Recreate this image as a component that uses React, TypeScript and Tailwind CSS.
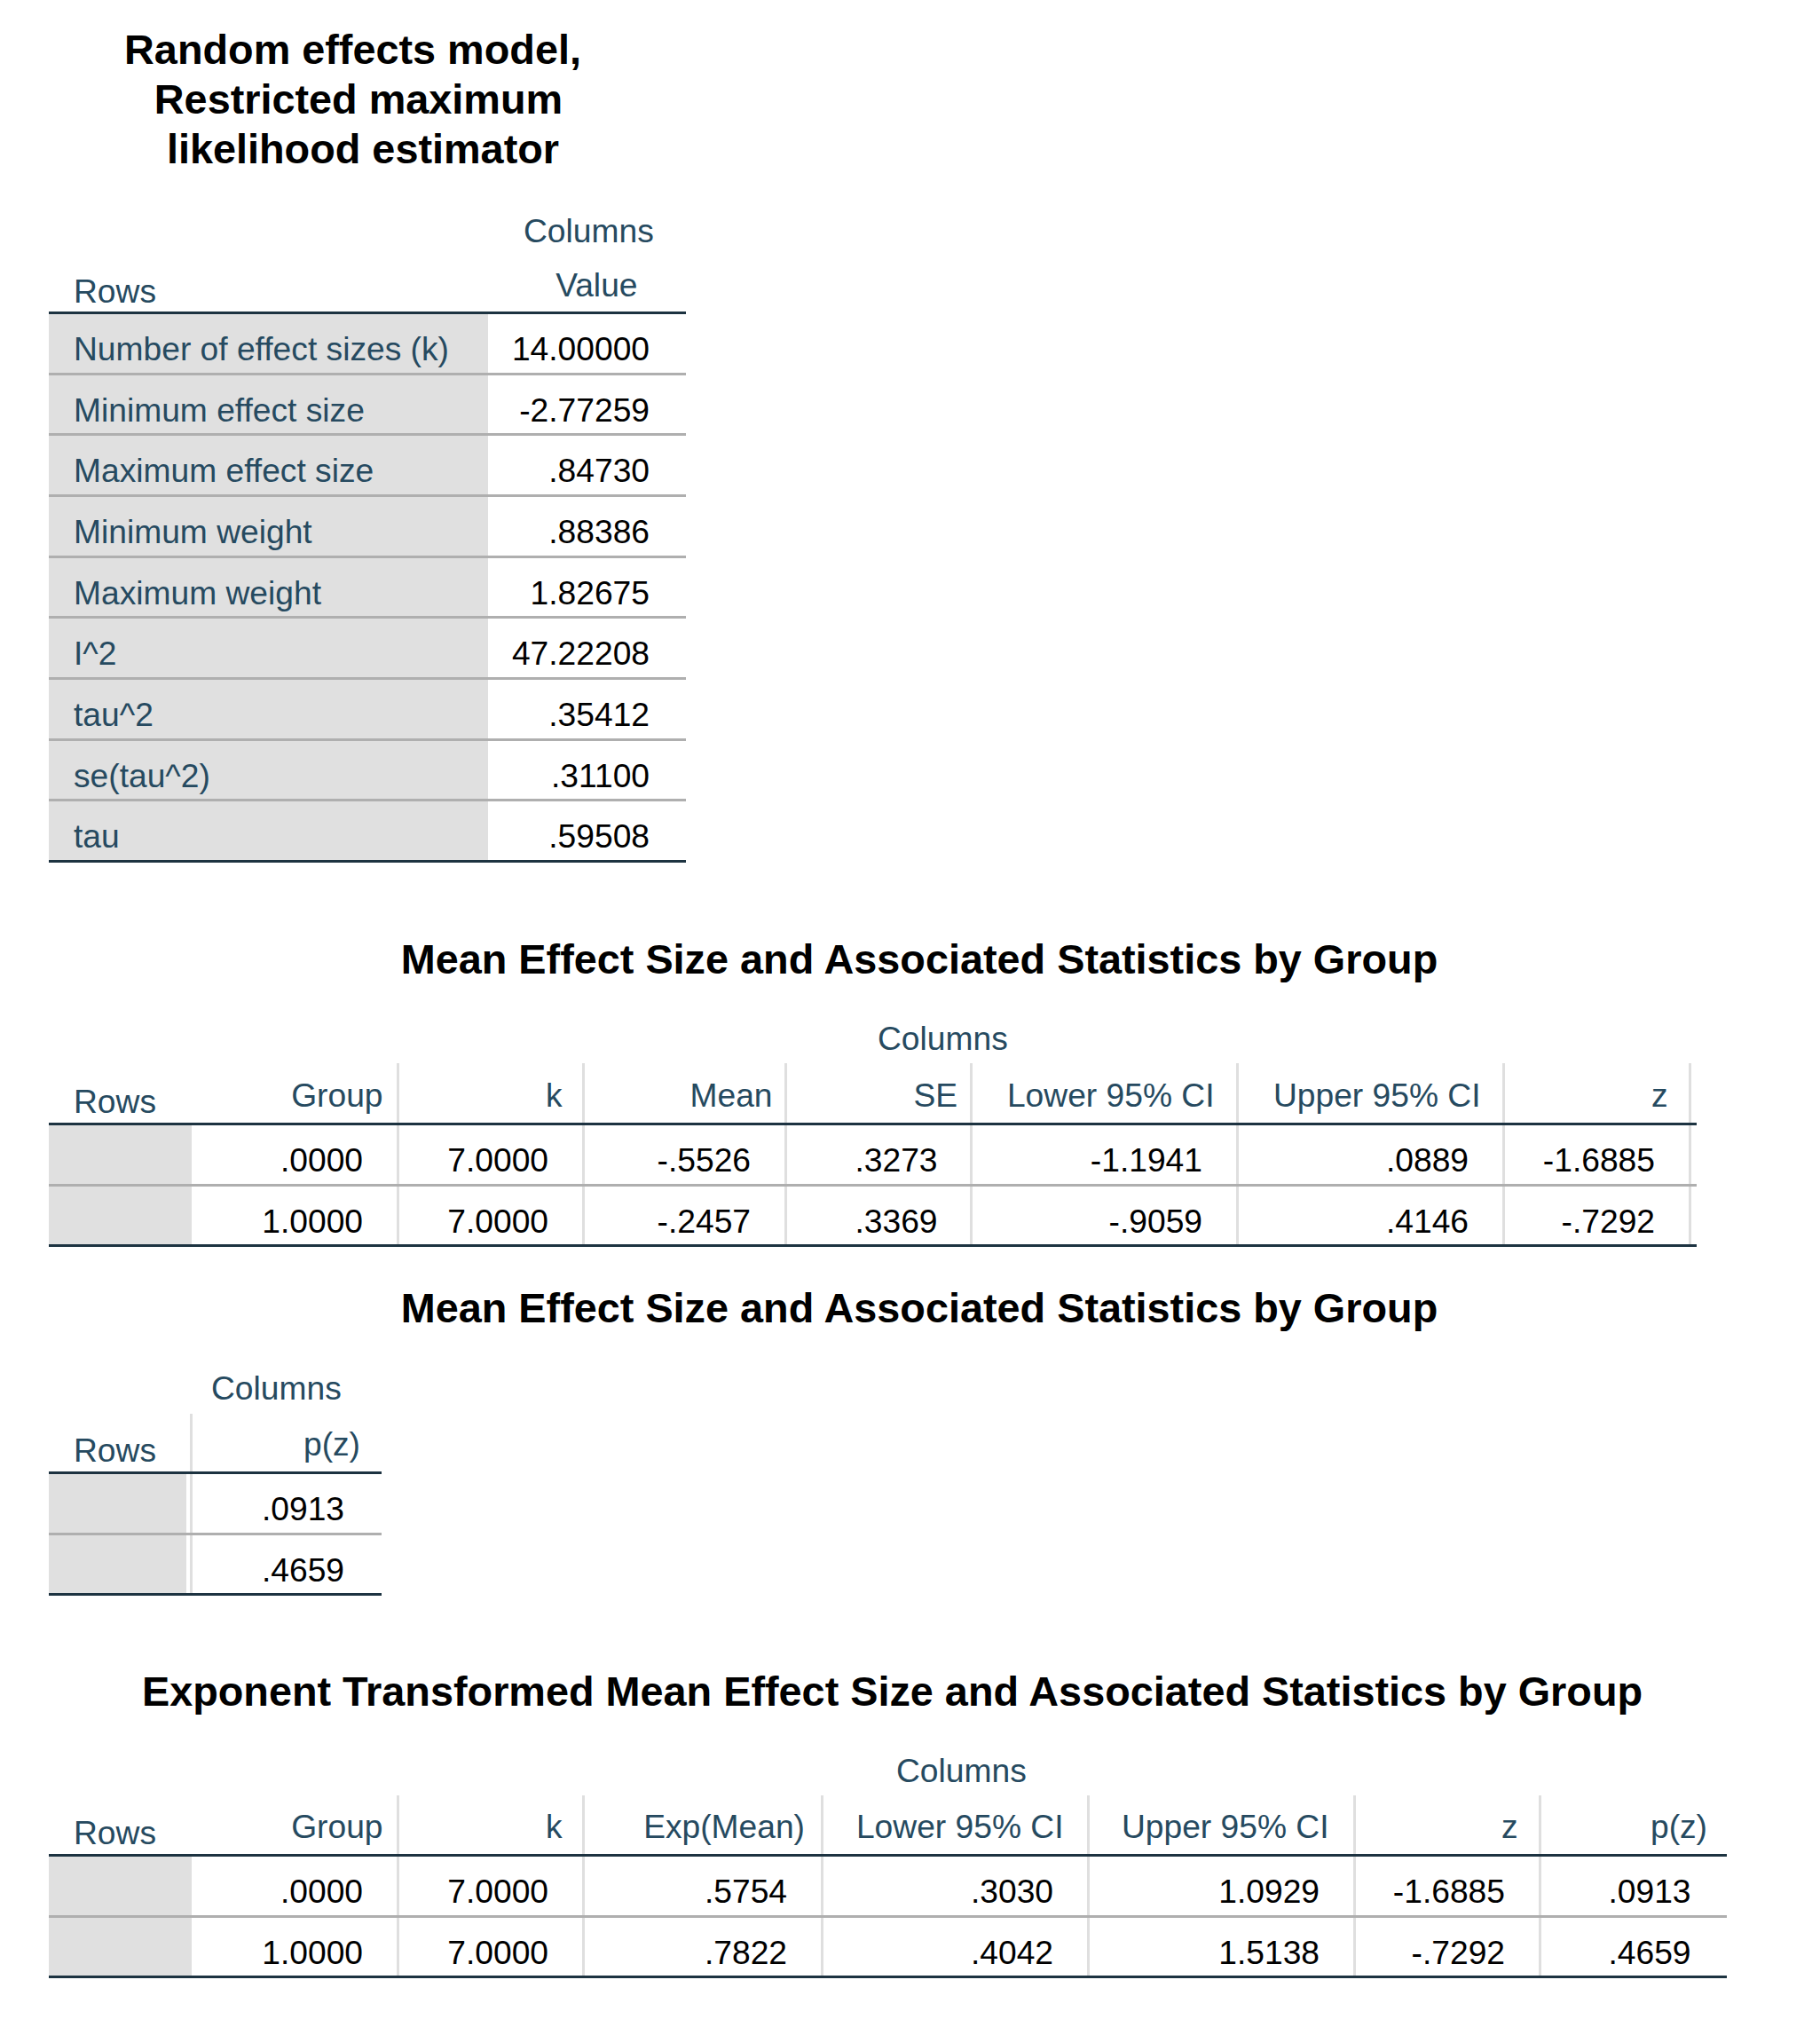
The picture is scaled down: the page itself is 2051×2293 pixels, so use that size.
import React from "react";

type ColDef = {
  head: string;
  w: string;
  headPr: string;
  dataPr: string;
  divider: boolean;
};

const HEAD = "text-[#264a60]";

function Title({ w, text }: { w: string; text: string }) {
  return (
    <div className={`${w} h-[56px] text-center text-[46.8px] leading-[56px] font-bold text-black whitespace-nowrap`}>
      {text}
    </div>
  );
}

function GroupTable({
  cols,
  rows,
  colsMl,
  headH,
  spacer,
}: {
  cols: ColDef[];
  rows: string[][];
  colsMl: string;
  headH: string;
  spacer?: string;
}) {
  return (
    <div className="flex flex-col items-start">
      <div className={`${colsMl} h-[42px] ${HEAD} whitespace-nowrap`}>Columns</div>
      <div className={`flex ${headH} border-b-[3px] border-b-[#1d3341]`}>
        <div className={`w-[161px] flex items-end pl-[28px] pb-[3px] ${HEAD} whitespace-nowrap`}>Rows</div>
        {cols.map((c) => (
          <div
            key={c.head}
            className={`${c.w} ${c.divider ? "border-r-[3px] border-r-[#dfdfdf]" : ""} flex items-end justify-end ${c.headPr} pb-[10px] ${HEAD} whitespace-nowrap`}
          >
            {c.head}
          </div>
        ))}
        {spacer ? <div className={spacer} /> : null}
      </div>
      {rows.map((r, i) => (
        <div
          key={i}
          className={`flex h-[68.67px] border-b-[3px] ${i === rows.length - 1 ? "border-b-[#1d3341]" : "border-b-[#afafaf]"}`}
        >
          <div className="w-[161px] bg-[#e0e0e0]" />
          {cols.map((c, j) => (
            <div
              key={j}
              className={`${c.w} ${c.divider ? "border-r-[3px] border-r-[#dfdfdf]" : ""} flex justify-end ${c.dataPr} pt-[18px] text-black whitespace-nowrap`}
            >
              {r[j]}
            </div>
          ))}
          {spacer ? <div className={spacer} /> : null}
        </div>
      ))}
    </div>
  );
}

const table1: [string, string][] = [
  ["Number of effect sizes (k)", "14.00000"],
  ["Minimum effect size", "-2.77259"],
  ["Maximum effect size", ".84730"],
  ["Minimum weight", ".88386"],
  ["Maximum weight", "1.82675"],
  ["I^2", "47.22208"],
  ["tau^2", ".35412"],
  ["se(tau^2)", ".31100"],
  ["tau", ".59508"],
];

const cols2: ColDef[] = [
  { head: "Group", w: "w-[233.5px]", headPr: "pr-[15px]", dataPr: "pr-[37.5px]", divider: true },
  { head: "k", w: "w-[209px]", headPr: "pr-[22px]", dataPr: "pr-[37.5px]", divider: true },
  { head: "Mean", w: "w-[228px]", headPr: "pr-[13px]", dataPr: "pr-[37.5px]", divider: true },
  { head: "SE", w: "w-[209px]", headPr: "pr-[13.5px]", dataPr: "pr-[36px]", divider: true },
  { head: "Lower 95% CI", w: "w-[300px]", headPr: "pr-[24px]", dataPr: "pr-[37.5px]", divider: true },
  { head: "Upper 95% CI", w: "w-[300px]", headPr: "pr-[24px]", dataPr: "pr-[37.5px]", divider: true },
  { head: "z", w: "w-[210px]", headPr: "pr-[23px]", dataPr: "pr-[37.5px]", divider: true },
];

const rows2 = [
  [".0000", "7.0000", "-.5526", ".3273", "-1.1941", ".0889", "-1.6885"],
  ["1.0000", "7.0000", "-.2457", ".3369", "-.9059", ".4146", "-.7292"],
];

const cols4: ColDef[] = [
  { head: "Group", w: "w-[233.5px]", headPr: "pr-[15px]", dataPr: "pr-[37.5px]", divider: true },
  { head: "k", w: "w-[209px]", headPr: "pr-[22px]", dataPr: "pr-[37.5px]", divider: true },
  { head: "Exp(Mean)", w: "w-[269px]", headPr: "pr-[17.5px]", dataPr: "pr-[37.5px]", divider: true },
  { head: "Lower 95% CI", w: "w-[300px]", headPr: "pr-[26px]", dataPr: "pr-[37.5px]", divider: true },
  { head: "Upper 95% CI", w: "w-[300px]", headPr: "pr-[27px]", dataPr: "pr-[37.5px]", divider: true },
  { head: "z", w: "w-[209px]", headPr: "pr-[23px]", dataPr: "pr-[37.5px]", divider: true },
  { head: "p(z)", w: "w-[209.5px]", headPr: "pr-[22px]", dataPr: "pr-[40.5px]", divider: false },
];

const rows4 = [
  [".0000", "7.0000", ".5754", ".3030", "1.0929", "-1.6885", ".0913"],
  ["1.0000", "7.0000", ".7822", ".4042", "1.5138", "-.7292", ".4659"],
];

export default function App() {
  return (
    <div className="min-h-[2293px] w-full bg-white pl-[55px] pt-[28px] font-['Liberation_Sans',Arial,Helvetica,sans-serif] text-[37.2px] leading-[42px]">
      {/* Section 1 */}
      <div className="flex flex-col">
        <Title w="w-[685px]" text="Random effects model," />
        <Title w="w-[698px]" text="Restricted maximum" />
        <Title w="w-[708px]" text="likelihood estimator" />
        <div className={`mt-[43.3px] ml-[535px] h-[42px] ${HEAD} whitespace-nowrap`}>Columns</div>
        <div className="flex w-[718px] h-[72.7px] border-b-[3px] border-b-[#1d3341]">
          <div className={`w-[495px] flex items-end pl-[28px] pb-[2px] ${HEAD}`}>Rows</div>
          <div className={`w-[223px] flex items-end justify-end pr-[54.5px] pb-[9px] ${HEAD}`}>Value</div>
        </div>
        {table1.map(([label, value], i) => (
          <div
            key={label}
            className={`flex w-[718px] h-[68.67px] border-b-[3px] ${i === table1.length - 1 ? "border-b-[#1d3341]" : "border-b-[#afafaf]"}`}
          >
            <div className={`w-[495px] bg-[#e0e0e0] pl-[28px] pt-[18px] ${HEAD} whitespace-nowrap`}>{label}</div>
            <div className="w-[223px] flex justify-end pr-[41px] pt-[18px] text-black whitespace-nowrap">{value}</div>
          </div>
        ))}
      </div>

      {/* Section 2 */}
      <div className="mt-[80.8px] flex flex-col">
        <Title w="w-[1962px]" text="Mean Effect Size and Associated Statistics by Group" />
        <div className="mt-[40.5px]" />
        <GroupTable cols={cols2} rows={rows2} colsMl="ml-[934px] mb-[6.7px]" headH="h-[70px]" spacer="w-[6.5px]" />
      </div>

      {/* Section 3 */}
      <div className="mt-[40.5px] flex flex-col">
        <Title w="w-[1962px]" text="Mean Effect Size and Associated Statistics by Group" />
        <div className={`mt-[41.5px] ml-[183px] h-[42px] ${HEAD} whitespace-nowrap`}>Columns</div>
        <div className="mt-[7.7px] flex w-[375px] h-[68px] border-b-[3px] border-b-[#1d3341]">
          <div className={`w-[159px] flex items-end pl-[28px] pb-[3px] ${HEAD}`}>Rows</div>
          <div className={`w-[216px] border-l-[3px] border-l-[#dfdfdf] flex items-end justify-end pr-[24px] pb-[10px] ${HEAD}`}>p(z)</div>
        </div>
        {[".0913", ".4659"].map((v, i) => (
          <div
            key={v}
            className={`flex w-[375px] h-[68.67px] border-b-[3px] ${i === 1 ? "border-b-[#1d3341]" : "border-b-[#afafaf]"}`}
          >
            <div className="w-[155px] bg-[#e0e0e0]" />
            <div className="w-[4px]" />
            <div className="w-[216px] border-l-[3px] border-l-[#dfdfdf] flex justify-end pr-[42px] pt-[18px] text-black">{v}</div>
          </div>
        ))}
      </div>

      {/* Section 4 */}
      <div className="mt-[79.5px] flex flex-col">
        <Title w="w-[1901px]" text="Exponent Transformed Mean Effect Size and Associated Statistics by Group" />
        <div className="mt-[40.5px]" />
        <GroupTable cols={cols4} rows={rows4} colsMl="ml-[955px] mb-[6.7px]" headH="h-[69px]" />
      </div>
    </div>
  );
}
